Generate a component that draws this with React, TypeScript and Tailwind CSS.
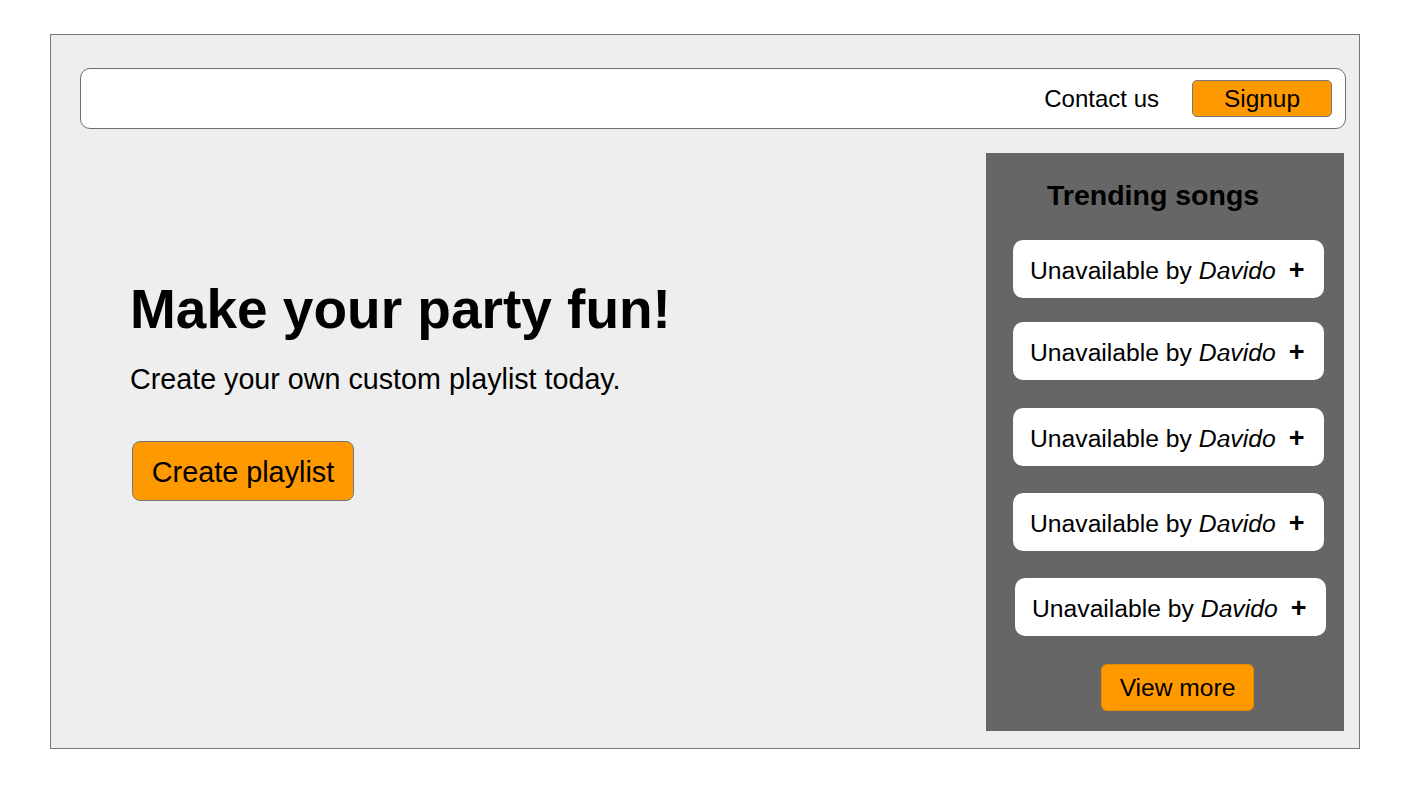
import React from "react";

const songs = [
  { title: "Unavailable", artist: "Davido", mt: "mt-0", ml: "ml-[27px]" },
  { title: "Unavailable", artist: "Davido", mt: "mt-[24px]", ml: "ml-[27px]" },
  { title: "Unavailable", artist: "Davido", mt: "mt-[28px]", ml: "ml-[27px]" },
  { title: "Unavailable", artist: "Davido", mt: "mt-[27px]", ml: "ml-[27px]" },
  { title: "Unavailable", artist: "Davido", mt: "mt-[27px]", ml: "ml-[29px]" },
];

function SongCard({ title, artist, className }: { title: string; artist: string; className: string }) {
  return (
    <div
      className={
        "w-[311px] h-[58px] rounded-[10px] bg-white flex items-center pl-[17px] pt-[3px] text-[24.7px] text-black " +
        className
      }
    >
      <span>
        {title} by <i>{artist}</i>
      </span>
      <span className="ml-[13px] font-bold text-[27px] leading-none">+</span>
    </div>
  );
}

export default function App() {
  return (
    <div
      className="min-h-screen bg-white pt-[34px] pl-[50px]"
      style={{ fontFamily: '"Liberation Sans", Arial, sans-serif' }}
    >
      <div className="w-[1310px] h-[715px] border border-[#777777] bg-[#eeeeee] pl-[29px] pr-[13px] pt-[33px]">
        {/* top bar */}
        <nav className="h-[61px] rounded-[10px] border border-[#6e6e6e] bg-white flex items-center justify-end pr-[13px]">
          <a className="text-[24px] text-black mr-[33px] pt-[1px]">Contact us</a>
          <button className="w-[140px] h-[37px] rounded-[5px] border border-[#777777] bg-[#ff9900] text-[24.4px] text-black">
            Signup
          </button>
        </nav>

        <div className="flex mt-[24px]">
          {/* hero */}
          <div className="flex-1 pl-[50px] pt-[124px]">
            <h1 className="text-[55px] leading-[64px] font-bold text-black">Make your party fun!</h1>
            <p className="mt-[22px] text-[28.7px] leading-[32px] text-black">Create your own custom playlist today.</p>
            <button className="mt-[46px] ml-[2px] w-[222px] h-[60px] rounded-[8px] border border-[#777777] bg-[#ff9900] pt-[3px] text-[28.8px] text-black">
              Create playlist
            </button>
          </div>

          {/* trending */}
          <aside className="w-[358px] h-[578px] mr-[2px] bg-[#666666] pt-[26px]">
            <h2 className="pl-[61px] text-[28.5px] leading-[32px] font-bold text-black">Trending songs</h2>
            <div className="mt-[29px] flex flex-col">
              {songs.map((s, i) => (
                <SongCard key={i} title={s.title} artist={s.artist} className={s.mt + " " + s.ml} />
              ))}
            </div>
            <button className="mt-[28px] ml-[115px] w-[153px] h-[47px] rounded-[6px] border border-[#e38a00] bg-[#ff9900] pt-[2px] text-[24.6px] text-black">
              View more
            </button>
          </aside>
        </div>
      </div>
    </div>
  );
}
